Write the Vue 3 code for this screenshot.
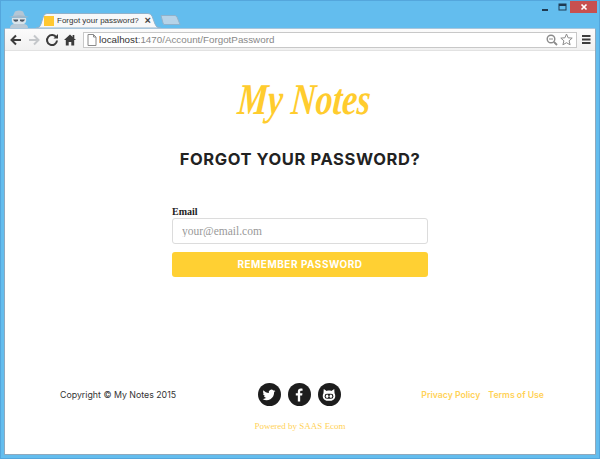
<script setup>
const forgot = 'Forgot your password?'
</script>

<template>
  <div class="window">
    <div class="titlebar">
      <svg class="spy" width="22" height="18" viewBox="0 0 22 18">
        <path d="M5 6 L7 1.500 Q11 -.500 15 1.500 L17 6 Z" fill="#b4c6d5"/>
        <path d="M1 7 Q11 3.500 21 7 Q11 9 1 7Z" fill="#a4b8c9"/>
        <path d="M4 8 H18 Q19 12 16 14 H6 Q3 12 4 8Z" fill="#d8e3ea"/>
        <path d="M5 9.500 H10 L10 11 Q7.500 12.500 6 11Z M12 9.500 H17 L16 11 Q14.500 12.500 12 11Z" fill="#4b5560"/>
        <path d="M2 18 Q2 14 7 14 H15 Q20 14 20 18Z" fill="#b9c9d6"/>
      </svg>
      <div class="tab">
        <svg class="tab-shape" width="125" height="15" viewBox="0 0 125 15" preserveAspectRatio="none">
          <path d="M0 15 Q4 15 5 11 L7.500 3 Q8.500 .500 11 .500 H112 Q115 .500 116 3 L119 11 Q120 15 125 15Z" fill="#f7f8f9" stroke="#8fb2cc" stroke-width="1"/>
        </svg>
        <span class="favicon"></span>
        <span class="tab-title">{{ forgot }}</span>
        <span class="tab-close">×</span>
      </div>
      <svg class="newtab" width="21" height="10" viewBox="0 0 21 10">
        <path d="M1 .500 H15 Q16 .500 17 2 L20 9.500 H4 Q3.500 9.500 3 8 Z" fill="#b6d3e8" stroke="#8fb2cc"/>
      </svg>
      <div class="controls">
        <svg width="9" height="9" viewBox="0 0 9 9" class="min"><rect x="1" y="5" width="6" height="2" fill="#1f3a52"/></svg>
        <svg width="9" height="9" viewBox="0 0 9 9" class="max"><rect x="1" y="1" width="7" height="6" fill="none" stroke="#1f3a52" stroke-width="1"/><rect x="1" y="1" width="7" height="2" fill="#1f3a52"/></svg>
        <div class="close">
          <svg width="8" height="8" viewBox="0 0 8 8"><path d="M1.500 1.500 L6.500 6.500 M6.500 1.500 L1.500 6.500" stroke="#fff" stroke-width="1.700"/></svg>
        </div>
      </div>
    </div>

    <div class="panel">
      <div class="toolbar">
        <svg width="14" height="14" viewBox="0 0 14 14" class="nav"><path d="M12 7 H3 M7 2.500 L2.500 7 L7 11.500" fill="none" stroke="#3c3c3c" stroke-width="2"/></svg>
        <svg width="14" height="14" viewBox="0 0 14 14" class="nav"><path d="M2 7 H11 M7 2.500 L11.500 7 L7 11.500" fill="none" stroke="#c4c7ca" stroke-width="2"/></svg>
        <svg width="14" height="14" viewBox="0 0 14 14" class="nav"><path d="M11.300 4.500 A5 5 0 1 0 12 7.500" fill="none" stroke="#3c3c3c" stroke-width="2"/><path d="M8.500 5.500 H13 V1 Z" fill="#3c3c3c"/></svg>
        <svg width="14" height="14" viewBox="0 0 14 14" class="nav"><path d="M7 1.500 L13 7 H11.200 V12.500 H8.300 V9 H5.700 V12.500 H2.800 V7 H1 Z" fill="#3c3c3c"/><rect x="9.600" y="2" width="1.700" height="3" fill="#3c3c3c"/></svg>
        <div class="omnibox">
          <svg width="10" height="12" viewBox="0 0 10 12" class="doc"><path d="M1 .500 H6.500 L9 3 V11.500 H1 Z M6.500 .500 V3 H9" fill="#fff" stroke="#8a8a8a"/></svg>
          <span class="url"><b>localhost</b>:1470/Account/ForgotPassword</span>
          <svg width="12" height="12" viewBox="0 0 12 12" class="zoomi"><circle cx="5" cy="5" r="3.800" fill="none" stroke="#8b8b8b" stroke-width="1.400"/><path d="M3 5 H7" stroke="#8b8b8b"/><path d="M8 8 L11 11" stroke="#8b8b8b" stroke-width="1.800"/></svg>
          <svg width="13" height="13" viewBox="0 0 13 13"><path d="M6.500 1 L8.100 4.800 L12.200 5.100 L9.100 7.800 L10.100 11.800 L6.500 9.700 L2.900 11.800 L3.900 7.800 L.800 5.100 L4.900 4.800 Z" fill="#fff" stroke="#8b8b8b"/></svg>
        </div>
        <svg width="11" height="10" viewBox="0 0 11 10" class="menu"><path d="M1 1 H9.500 M1 4.500 H9.500 M1 8 H9.500" stroke="#3c3c3c" stroke-width="2"/></svg>
      </div>

      <main class="page">
        <div class="logo">My Notes</div>
        <h1 class="heading">FORGOT YOUR PASSWORD?</h1>
        <form class="form" @submit.prevent>
          <label class="label" for="email">Email</label>
          <input id="email" class="input" type="text" placeholder="your@email.com" />
          <button class="submit" type="button">REMEMBER PASSWORD</button>
        </form>

        <footer class="footer">
          <div class="foot-row">
            <span class="copy">Copyright © My Notes 2015</span>
            <div class="social">
              <a class="soc">
                <svg width="14" height="14" viewBox="0 0 24 24"><path fill="#fff" d="M23 5.100c-.8.4-1.700.6-2.600.7.9-.6 1.600-1.400 2-2.500-.9.5-1.800.9-2.900 1.100a4.500 4.500 0 0 0-7.800 4.100C7.900 8.300 4.600 6.500 2.400 3.800a4.500 4.500 0 0 0 1.400 6c-.7 0-1.400-.2-2-.6 0 2.200 1.500 4.100 3.600 4.500-.7.2-1.400.2-2 .1.600 1.800 2.300 3.100 4.200 3.100A9 9 0 0 1 1 18.800 12.800 12.800 0 0 0 20.700 7.400c.9-.6 1.700-1.400 2.300-2.300z"/></svg>
              </a>
              <a class="soc">
                <svg width="14" height="14" viewBox="0 0 24 24"><path fill="#fff" d="M14 23v-10h3.400l.5-4H14V6.500c0-1.200.3-1.900 2-1.900h2.100V1.100C17.700 1 16.500 1 15.100 1 12 1 10 2.800 10 6.100V9H6.500v4H10v10z"/></svg>
              </a>
              <a class="soc">
                <svg width="14" height="14" viewBox="0 0 24 24"><path fill="#fff" d="M3 1.500 8 5c2.500-.7 5.500-.7 8 0l5-3.500.5 7.500c.8 1.300 1.200 2.800 1.200 4.500C22.700 19.500 18 22 12 22S1.300 19.500 1.300 13.500c0-1.700.4-3.200 1.200-4.500z"/><rect x="4.500" y="10" width="15" height="8.500" rx="4" fill="#1d1d1d"/><ellipse cx="8.800" cy="14.200" rx="2.300" ry="3" fill="#fff"/><ellipse cx="15.200" cy="14.200" rx="2.300" ry="3" fill="#fff"/></svg>
              </a>
            </div>
            <div class="links">
              <a>Privacy Policy</a>
              <a>Terms of Use</a>
            </div>
          </div>
          <div class="powered">Powered by SAAS Ecom</div>
        </footer>
      </main>
    </div>
  </div>
</template>

<style>
html, body { margin: 0; padding: 0; }
</style>

<style scoped>
.window {
  width: 600px;
  height: 459px;
  box-sizing: border-box;
  background: #63bdee;
  border: 1px solid #54a6dc;
  padding: 0 3px 3px;
  display: flex;
  flex-direction: column;
  overflow: hidden;
}
.titlebar {
  height: 27px;
  flex: none;
  display: flex;
  align-items: flex-end;
  position: relative;
}
.spy { margin-left: 4px; flex: none; }
.tab {
  position: relative;
  width: 125px;
  height: 15px;
  margin-left: 6px;
  flex: none;
  display: flex;
  align-items: center;
  padding-left: 8px;
  box-sizing: border-box;
}
.tab-shape { position: absolute; left: 0; top: 0; }
.favicon {
  position: relative;
  width: 10px;
  height: 10px;
  background: #ffc832;
  flex: none;
}
.tab-title {
  position: relative;
  margin-left: 3px;
  font: 8px "Liberation Sans", sans-serif;
  color: #333;
  white-space: nowrap;
}
.tab-close {
  position: absolute;
  right: 10px;
  top: 0;
  font: bold 11px/14px "Liberation Sans", sans-serif;
  color: #444;
}
.newtab { margin-left: -1px; margin-bottom: 3px; flex: none; }
.controls {
  margin-left: auto;
  align-self: flex-start;
  display: flex;
  align-items: flex-start;
}
.min { margin-top: 3px; margin-right: 8px; }
.max { margin-top: 2px; margin-right: 3px; }
.close {
  width: 27px;
  height: 12px;
  margin-right: -1px;
  background: #c75050;
  display: flex;
  align-items: center;
  justify-content: center;
}
.panel {
  flex: 1;
  min-height: 0;
  display: flex;
  flex-direction: column;
  background: #fff;
  border: 1px solid #8fa9bd;
  border-top-color: #a9c6dc;
  border-radius: 2px 2px 0 0;
}
.toolbar {
  height: 22px;
  flex: none;
  box-sizing: border-box;
  background: linear-gradient(#fbfbfb, #f1f1f1);
  border-bottom: 1px solid #e2e2e2;
  display: flex;
  align-items: center;
  padding: 0 3px;
}
.nav { margin-left: 1px; margin-right: 3px; flex: none; }
.omnibox {
  flex: 1;
  margin-left: 3px;
  height: 16px;
  box-sizing: border-box;
  background: #fff;
  border: 1px solid #c8c8c8;
  display: flex;
  align-items: center;
  padding: 0 3px;
}
.doc { flex: none; }
.url {
  margin-left: 2px;
  flex: 1;
  font: 9.800px "Liberation Sans", sans-serif;
  color: #888;
  white-space: nowrap;
}
.url b { font-weight: 400; color: #333; }
.zoomi { margin-right: 2px; }
.menu { margin-left: 4px; flex: none; }

.page {
  flex: 1;
  min-height: 0;
  display: flex;
  flex-direction: column;
  align-items: center;
}
.logo {
  margin-top: 23px;
  height: 52px;
  font: italic 700 44px/52px "Liberation Serif", serif;
  color: #ffcc2e;
  white-space: nowrap;
  transform: translateX(4px) scaleX(0.77) skewX(-6deg);
}
.heading {
  margin: 21px 0 0;
  font: 700 16.500px/24px "Inter", sans-serif;
  letter-spacing: 0.6px;
  color: #222;
}
.form {
  width: 256px;
  margin-top: 34px;
  display: flex;
  flex-direction: column;
}
.label {
  font: 700 10px/13px "Liberation Serif", serif;
  color: #222;
}
.input {
  height: 26px;
  box-sizing: border-box;
  border: 1px solid #dcdcdc;
  border-radius: 3px;
  padding: 0 9px;
  font: 11.500px "Liberation Serif", serif;
  color: #333;
  outline: none;
  background: #fff;
}
.input::placeholder { color: #999; opacity: 1; }
.submit {
  margin-top: 8px;
  height: 25px;
  border: none;
  border-radius: 3px;
  background: #ffd033;
  color: #fff;
  font: 700 10px/25px "Inter", sans-serif;
  letter-spacing: 0.5px;
  padding: 0;
}
.footer {
  width: 100%;
  margin-top: auto;
  padding: 0 51px 23px;
  box-sizing: border-box;
}
.foot-row {
  display: grid;
  grid-template-columns: 1fr auto 1fr;
  align-items: center;
}
.copy {
  margin-left: 4px;
  font: 400 8.800px "Inter", sans-serif;
  color: #333;
  white-space: nowrap;
}
.social {
  display: flex;
  gap: 7px;
  transform: translateX(-1px);
}
.soc {
  width: 23px;
  height: 23px;
  border-radius: 50%;
  background: #1d1d1d;
  display: flex;
  align-items: center;
  justify-content: center;
}
.links {
  justify-self: end;
  display: flex;
  gap: 8px;
  font: 600 8.700px "Inter", sans-serif;
  color: #ffd257;
  white-space: nowrap;
}
.powered {
  margin-top: 15px;
  text-align: center;
  font: 9px "Liberation Serif", serif;
  color: #ffd257;
}
</style>
